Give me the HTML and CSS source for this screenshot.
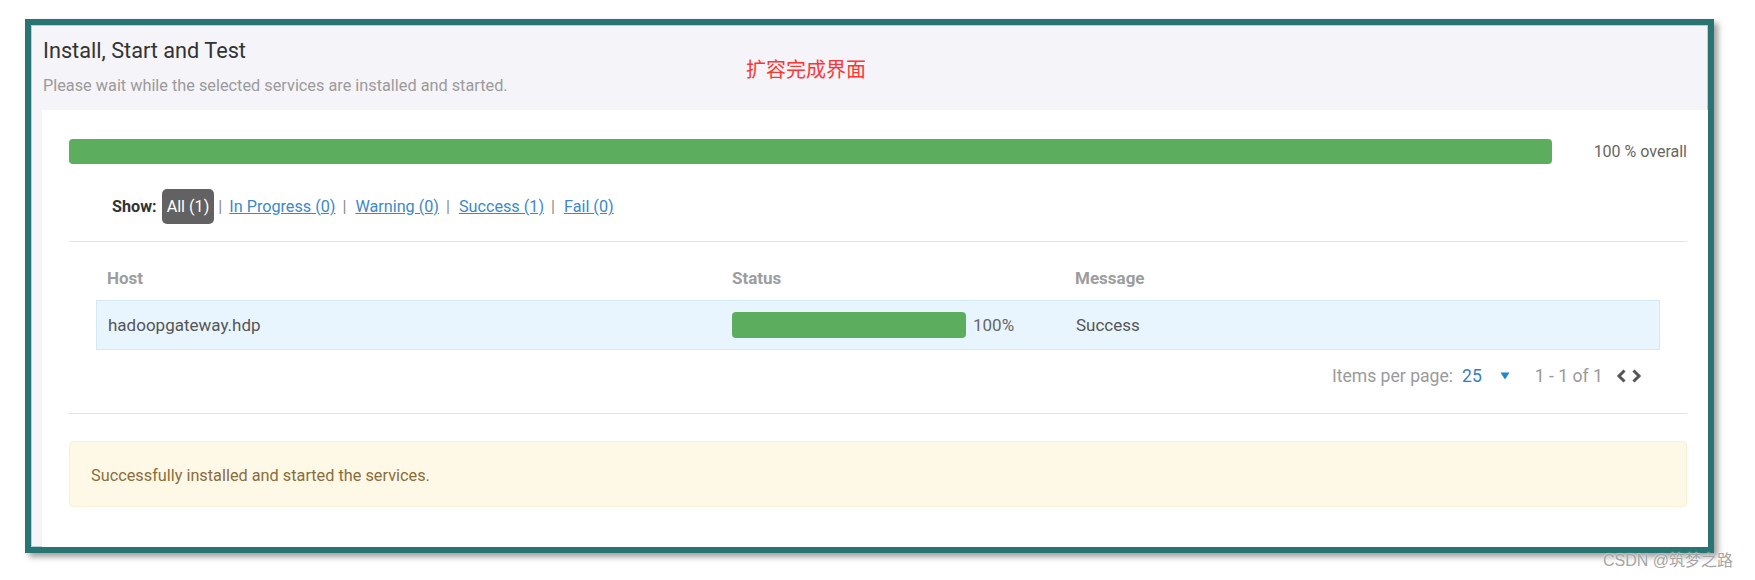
FILE: index.html
```html
<!DOCTYPE html>
<html lang="en">
<head>
<meta charset="utf-8">
<title>Install, Start and Test</title>
<link rel="stylesheet" href="styles.css">
</head>
<body>
<div class="frame">
  <div class="head">
    <h2 class="title">Install, Start and Test</h2>
    <p class="sub">Please wait while the selected services are installed and started.</p>
  </div>
  <div class="panel">
    <div class="overall">
      <div class="bar"></div>
      <span class="ovl">100 % overall</span>
    </div>
    <div class="filters">
      <span class="show">Show:</span>
      <span class="pill">All (1)</span>
      <span class="pipe">|</span>
      <a class="flink">In Progress (0)</a>
      <span class="pipe">|</span>
      <a class="flink">Warning (0)</a>
      <span class="pipe">|</span>
      <a class="flink">Success (1)</a>
      <span class="pipe">|</span>
      <a class="flink">Fail (0)</a>
    </div>
    <div class="sep"></div>
    <div class="table">
      <div class="thead">
        <span>Host</span>
        <span>Status</span>
        <span>Message</span>
      </div>
      <div class="trow">
        <span>hadoopgateway.hdp</span>
        <span class="st"><span class="mini"></span><span class="pct">100%</span></span>
        <span>Success</span>
      </div>
      <div class="pager">
        <span class="ipp">Items per page:</span>
        <span class="num">25</span>
        <svg class="caret" width="10" height="8" viewBox="0 0 10 8"><polygon points="0.5,0.5 9.5,0.5 5,7.5" fill="#1f86c8"/></svg>
        <span class="range">1 - 1 of 1</span>
        <span class="chev">
          <svg width="11" height="14" viewBox="0 0 11 14"><polyline points="8.5,1.5 3,7 8.5,12.5" fill="none" stroke="#555" stroke-width="3" stroke-linejoin="miter"/></svg>
          <svg width="11" height="14" viewBox="0 0 11 14"><polyline points="2.5,1.5 8,7 2.5,12.5" fill="none" stroke="#555" stroke-width="3" stroke-linejoin="miter"/></svg>
        </span>
      </div>
    </div>
    <div class="sep sep2"></div>
    <div class="alert">Successfully installed and started the services.</div>
  </div>
</div>
<div class="note">扩容完成界面</div>
<div class="wm">CSDN @筑梦之路</div>
</body>
</html>
```
FILE: styles.css
```css
* { box-sizing: border-box; }
html, body { margin: 0; padding: 0; background: #ffffff; }
body {
  position: relative;
  width: 1755px;
  height: 580px;
  overflow: hidden;
  padding: 19px 0 0 25px;
  font-family: Roboto, "Noto Sans", sans-serif;
}
.frame {
  width: 1689px;
  height: 534px;
  border: 6px solid #287472;
  background: #f5f4f8;
  box-shadow: 4px 4px 6px rgba(0,0,0,0.38), inset 0 0 0 1px #b7d0d0;
  display: flex;
  flex-direction: column;
}
.head {
  height: 85px;
  padding: 14px 0 0 12px;
  flex: none;
}
.title {
  margin: 0;
  font-size: 21.7px;
  line-height: 24px;
  font-weight: 400;
  color: #333333;
}
.sub {
  margin: 13px 0 0;
  font-size: 16.3px;
  line-height: 20px;
  color: #9b9b9b;
}
.panel {
  flex: 1;
  margin-left: 11px;
  background: #ffffff;
  padding: 29px 21px 0 27px;
}
.overall {
  display: flex;
  align-items: center;
  height: 25px;
}
.bar {
  flex: 1;
  height: 25px;
  background: #5dad5f;
  border-radius: 4px;
}
.ovl {
  width: 135px;
  text-align: right;
  font-size: 16px;
  color: #666666;
}
.filters {
  margin-top: 25px;
  height: 35px;
  display: flex;
  align-items: center;
  padding-left: 43px;
  font-size: 16.2px;
}
.show {
  font-weight: 700;
  color: #333333;
  margin-right: 5px;
}
.pill {
  background: #626262;
  color: #ffffff;
  height: 35px;
  line-height: 36px;
  padding: 0 5px;
  border-radius: 5px;
}
.pipe {
  color: #8a8a8a;
  margin: 0 9px 0 7px;
}
.pill + .pipe {
  margin-left: 4px;
  margin-right: 7px;
}
.flink {
  color: #3c89c9;
  text-decoration: underline;
}
.sep {
  margin-top: 17px;
  height: 1px;
  background: #e4e4e4;
}
.table {
  margin: 0 27px;
}
.thead, .trow {
  display: grid;
  grid-template-columns: 625px 343px 1fr;
  font-size: 17px;
  line-height: 20px;
}
.thead {
  padding: 26px 0 12px 11px;
  font-weight: 700;
  color: #9d9d9d;
}
.trow {
  height: 50px;
  align-items: center;
  padding-left: 11px;
  background: #e9f5fe;
  border: 1px solid #d4e9f7;
  color: #555555;
}
.st {
  display: flex;
  align-items: center;
  margin-left: -1px;
}
.mini {
  width: 234px;
  height: 26px;
  background: #5dad5f;
  border-radius: 4px;
}
.pct {
  margin-left: 7px;
  color: #666666;
}
.pager {
  display: flex;
  justify-content: flex-end;
  align-items: center;
  padding: 16px 18px 0 0;
  height: 36px;
  font-size: 17.6px;
  line-height: 20px;
  color: #9a9a9a;
}
.num {
  color: #3b7dbf;
  margin-left: 9px;
}
.caret {
  margin-left: 18px;
}
.range {
  margin-left: 25px;
}
.chev {
  margin-left: 13px;
  display: flex;
  gap: 4px;
}
.sep2 {
  margin-top: 27px;
}
.alert {
  margin-top: 27px;
  height: 66px;
  padding: 3px 21px 0;
  line-height: 61px;
  background: #fef8e7;
  border: 1px solid #fbf0d6;
  border-radius: 4px;
  font-size: 16.3px;
  color: #8a6d3b;
}
.note {
  position: absolute;
  left: 746px;
  top: 57px;
  font-family: "Noto Sans CJK SC", sans-serif;
  font-size: 20px;
  line-height: 24px;
  color: #ff3535;
}
.wm {
  position: absolute;
  left: 1603px;
  top: 551px;
  font-family: "Liberation Sans", "Noto Sans CJK SC", sans-serif;
  font-size: 16px;
  line-height: 20px;
  color: #a4a4a4;
  text-shadow: 0 0 2px #ffffff;
}
```
